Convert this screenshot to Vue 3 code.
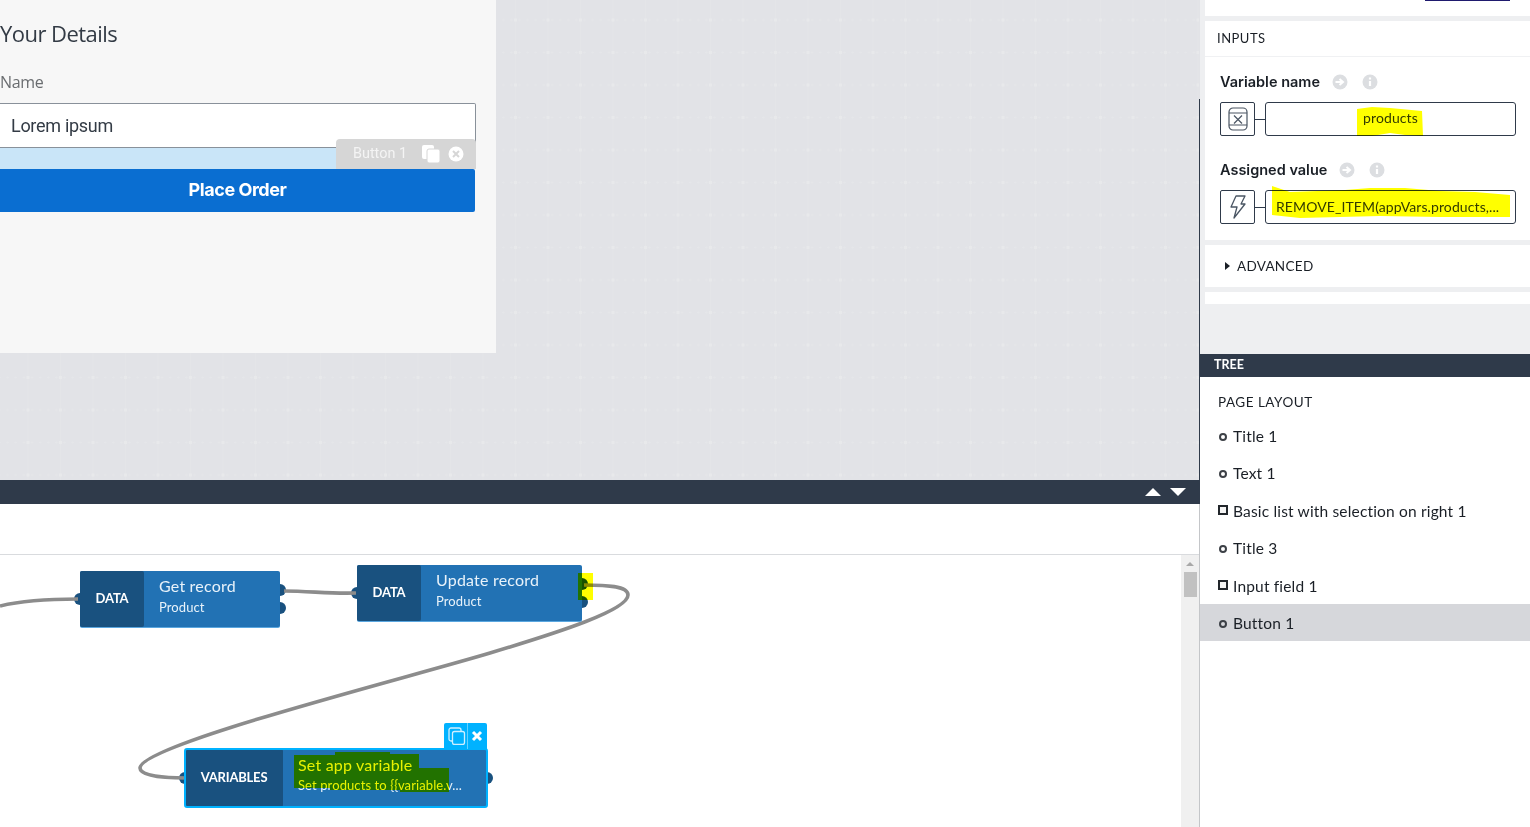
<template>
  <div class="app">
    <div class="main">
      <div class="view">
        <div class="page-card">
          <h1 class="title">Your Details</h1>
          <div class="label">Name</div>
          <div class="input">Lorem ipsum</div>
          <div class="drop-zone">
            <div class="selected-tag">
              <span>Button 1</span>
              <svg width="20" height="20" viewBox="0 0 20 20">
                <rect x="1" y="1" width="12" height="14" rx="2" fill="#fff" />
                <rect x="6" y="5" width="13" height="14" rx="2" fill="#fff" stroke="#d6d6d6" />
              </svg>
              <svg width="16" height="16" viewBox="0 0 16 16">
                <circle cx="8" cy="8" r="7.5" fill="#fff" />
                <path d="M5 5l6 6M11 5l-6 6" stroke="#d6d6d6" stroke-width="2" />
              </svg>
            </div>
          </div>
          <button class="order-btn">Place Order</button>
        </div>
      </div>

      <div class="dock-bar">
        <span class="arrow up"></span>
        <span class="arrow down"></span>
      </div>
      <div class="toolbar"></div>

      <div class="logic">
        <svg class="wires" width="1181" height="272" viewBox="0 555 1181 272">
          <path d="M0 606 C20 601 50 599 78 599" />
          <path d="M284 591 C310 591 330 594 356 593" />
          <path d="M584 585 C606 585 628 586 628 595 C628 610 560 632 490 653 C400 680 140 745 140 768 C140 776 165 778 186 778" />
        </svg>

        <div v-for="node in nodes" :key="node.title" class="node" :class="{ active: node.active }" :style="nodeStyle(node)">
          <div class="node-type">{{ node.type }}</div>
          <div class="node-body">
            <div class="node-title">{{ node.title }}</div>
            <div class="node-sub">{{ node.sub }}</div>
          </div>
          <span class="port in"></span>
          <template v-if="node.active">
            <span class="port out single"></span>
            <div class="node-tools">
              <svg width="18" height="18" viewBox="0 0 18 18" fill="none" stroke="#cfefff" stroke-width="1.3">
                <rect x="1" y="1" width="12" height="13" rx="2" />
                <rect x="4.5" y="4.5" width="12" height="13" rx="2" fill="#00b2ff" />
              </svg>
              <span class="tools-sep"></span>
              <svg width="12" height="12" viewBox="0 0 12 12">
                <path d="M2 2l8 8M10 2l-8 8" stroke="#fff" stroke-width="3" />
              </svg>
            </div>
          </template>
          <template v-else>
            <span class="port out first"></span>
            <span class="port out second"></span>
          </template>
        </div>

        <div class="scrollbar">
          <span class="scroll-up"></span>
          <span class="scroll-thumb"></span>
        </div>
      </div>
    </div>

    <aside class="side">
      <section class="panel top-strip"><span class="top-btn"></span></section>

      <section class="panel inputs">
        <div class="panel-head">INPUTS</div>
        <div class="field">
          <div class="field-label">
            Variable name
            <svg class="hint" width="16" height="16" viewBox="0 0 16 16">
              <circle cx="8" cy="8" r="7.5" fill="#dcdee1" />
              <path d="M3.5 8h6M7.5 5l3.5 3-3.5 3" fill="none" stroke="#fff" stroke-width="2" />
            </svg>
            <svg class="hint" width="16" height="16" viewBox="0 0 16 16">
              <circle cx="8" cy="8" r="7.5" fill="#dcdee1" />
              <path d="M8 7v5M8 3.5v2" stroke="#fff" stroke-width="2.2" />
            </svg>
          </div>
          <div class="field-row">
            <div class="bind-icon">
              <svg width="22" height="24" viewBox="0 0 22 24" fill="none" stroke="#4a5563" stroke-width="1.2">
                <rect x="2" y="1" width="18" height="22" rx="4" />
                <path d="M2 6h18M2 18h18M7 8.5l8 8M15 8.5l-8 8" />
              </svg>
            </div>
            <span class="bind-link"></span>
            <div class="bind-value centered">products</div>
          </div>
        </div>
        <div class="field">
          <div class="field-label">
            Assigned value
            <svg class="hint" width="16" height="16" viewBox="0 0 16 16">
              <circle cx="8" cy="8" r="7.5" fill="#dcdee1" />
              <path d="M3.5 8h6M7.5 5l3.5 3-3.5 3" fill="none" stroke="#fff" stroke-width="2" />
            </svg>
            <svg class="hint" width="16" height="16" viewBox="0 0 16 16">
              <circle cx="8" cy="8" r="7.5" fill="#dcdee1" />
              <path d="M8 7v5M8 3.5v2" stroke="#fff" stroke-width="2.2" />
            </svg>
          </div>
          <div class="field-row">
            <div class="bind-icon">
              <svg width="16" height="24" viewBox="0 0 16 24" fill="none" stroke="#4a5563" stroke-width="1.3" stroke-linejoin="round">
                <path d="M6 1h9l-4 8h4L4 23l3-11H1z" />
              </svg>
            </div>
            <span class="bind-link"></span>
            <div class="bind-value">REMOVE_ITEM(appVars.products,...</div>
          </div>
        </div>
      </section>

      <section class="panel advanced"><span class="caret"></span>ADVANCED</section>
      <section class="panel blank"></section>
      <div class="side-gap"></div>

      <div class="tree-head">TREE</div>
      <section class="tree">
        <div class="tree-title">PAGE LAYOUT</div>
        <div v-for="item in tree" :key="item.name" class="tree-row" :class="{ selected: item.selected }">
          <span :class="item.box ? 'box' : 'dot'"></span>{{ item.name }}
        </div>
      </section>
    </aside>

    <!-- yellow marker strokes drawn on top of the screenshot -->
    <svg class="marker" width="1530" height="827" viewBox="0 0 1530 827">
      <path d="M1357 109 L1372 107 L1390 108 L1422 111 L1423 136 L1405 135 L1390 133 L1372 136 L1357 136 Z" />
      <path d="M1272 186 L1290 192 L1345 190 L1370 188 L1405 188 L1440 191 L1475 192 L1510 195 L1510 217 L1440 217 L1380 216 L1300 218 L1272 215 Z" />
      <path d="M578 573 H593 V600 H578 Z" />
      <path d="M294 755 H335 V752 H390 V754 H419 V768 H449 V792 H400 V790 H330 V788 H294 Z" />
    </svg>
  </div>
</template>

<script setup>
const nodes = [
  { type: 'DATA', title: 'Get record', sub: 'Product', x: 80, y: 16, w: 200 },
  { type: 'DATA', title: 'Update record', sub: 'Product', x: 357, y: 10, w: 225 },
  { type: 'VARIABLES', title: 'Set app variable', sub: 'Set products to {{variable.v...', x: 185, y: 194, w: 302, active: true }
]

const tree = [
  { name: 'Title 1' },
  { name: 'Text 1' },
  { name: 'Basic list with selection on right 1', box: true },
  { name: 'Title 3' },
  { name: 'Input field 1', box: true },
  { name: 'Button 1', selected: true }
]

function nodeStyle(node) {
  return { left: node.x + 'px', top: node.y + 'px', width: node.w + 'px' }
}
</script>

<style>
html, body { margin: 0; overflow: hidden; background: #fff; }
</style>

<style scoped>
.app { position: relative; display: flex; width: 1530px; height: 827px; overflow: hidden; font-family: Lato, "Open Sans", sans-serif; color: #1a1f26; }
.main { width: 1199px; flex-shrink: 0; display: flex; flex-direction: column; }
.marker { position: absolute; left: 0; top: 0; pointer-events: none; mix-blend-mode: multiply; }
.marker path { fill: #ffff00; }

.view {
  height: 480px;
  background-color: #e2e3e7;
  background-image:
    radial-gradient(circle, #e8e9eb 1.5px, transparent 2px),
    radial-gradient(circle, #e5e6e9 0.8px, transparent 1.2px),
    linear-gradient(90deg, #e4e5e8 1px, transparent 1px);
  background-size: 32.5px 32.5px, 8.125px 32.5px, 32.5px 32.5px;
  background-position: 11.75px 3.75px, 11.75px 3.75px, 27.5px 0;
}
.page-card { width: 496px; height: 353px; background: #f7f7f7; box-sizing: border-box; padding-top: 19px; }
.title { margin: 0; font: 400 22px/28px "Open Sans", sans-serif; letter-spacing: -0.55px; color: #333b45; }
.label { margin-top: 24px; font: 400 16px/22px "Open Sans", sans-serif; letter-spacing: -0.3px; color: #6a6d70; }
.input {
  margin-top: 10px;
  width: 476px;
  height: 45px;
  box-sizing: border-box;
  padding-left: 11px;
  background: #fff;
  border: 1px solid #89919a;
  border-left: 0;
  border-radius: 0 2px 0 0;
  font: 400 18px/43px Roboto, sans-serif;
  letter-spacing: -0.3px;
  color: #333b45;
}
.drop-zone { width: 476px; height: 21px; background: #c9e5f8; display: flex; justify-content: flex-end; }
.selected-tag {
  margin-top: -9px;
  width: 140px;
  height: 30px;
  box-sizing: border-box;
  padding: 0 12px 0 17px;
  display: flex;
  align-items: center;
  background: #d6d6d6;
  border-radius: 4px 4px 0 0;
  font: 400 14.4px/1 Roboto, sans-serif;
  color: #f4f4f4;
}
.selected-tag span { flex: 1; }
.selected-tag svg + svg { margin-left: 7px; }
.order-btn {
  display: block;
  width: 475px;
  height: 43px;
  padding: 0 0 2px;
  border: 0;
  border-radius: 0 2px 2px 0;
  background: #0a6ed1;
  color: #fff;
  font: 700 18px/41px Inter, sans-serif;
  letter-spacing: -0.45px;
}

.dock-bar { height: 24px; background: #2f3a4a; display: flex; justify-content: flex-end; align-items: center; gap: 9px; padding-right: 13px; }
.arrow { width: 0; height: 0; border-left: 8px solid transparent; border-right: 8px solid transparent; }
.arrow.up { border-bottom: 8px solid #fff; }
.arrow.down { border-top: 8px solid #fff; }
.toolbar { height: 50px; background: #fff; border-bottom: 1px solid #d9dbde; }

.logic { position: relative; isolation: isolate; flex: 1; background: #fff; overflow: hidden; }
.wires { position: absolute; left: 0; top: 0; }
.wires path { fill: none; stroke: #8c8c8c; stroke-width: 3.6; }

.node {
  position: absolute;
  height: 56px;
  display: flex;
  background: #2272b4;
  border-radius: 2px;
  box-shadow: 0 1px 0 #5aa7e0;
  color: #fff;
}
.node.active { height: 58px; box-shadow: none; outline: 2px solid #00b2ff; outline-offset: -1px; }
.node-type {
  width: 64px;
  flex-shrink: 0;
  box-sizing: border-box;
  padding-bottom: 2px;
  display: flex;
  align-items: center;
  justify-content: center;
  background: #19517f;
  border-radius: 2px;
  font: 700 13px/1 Lato, sans-serif;
  letter-spacing: -0.2px;
}
.node.active .node-type { width: 98px; }
.node-body { padding: 5px 0 0 15px; min-width: 0; }
.node.active .node-body { padding: 6px 0 0 15px; }
.node-title { font: 400 16px/19px Lato, sans-serif; letter-spacing: 0.2px; white-space: nowrap; color: #e8f2fa; }
.node-sub { margin-top: 3px; font: 400 13px/19px Lato, sans-serif; letter-spacing: 0.1px; white-space: nowrap; color: #e8f2fa; }
.node.active .node-sub { margin-top: 2px; }
.port { position: absolute; width: 12px; height: 12px; border-radius: 50%; background: #19517f; z-index: -1; }
.port.in { left: -6px; top: 22px; }
.node.active .port.in { top: 23px; }
.port.out { right: -6px; }
.port.first { top: 13px; }
.port.second { top: 31px; }
.port.single { top: 23px; }
.node-tools {
  position: absolute;
  right: 0;
  top: -26px;
  width: 43px;
  height: 26px;
  box-sizing: border-box;
  padding-left: 4px;
  display: flex;
  align-items: center;
  background: #00b2ff;
  border-radius: 2px 2px 0 0;
}
.tools-sep { width: 1px; height: 26px; margin: 0 3px 0 1px; background: #66d1ff; }
.scrollbar { position: absolute; right: 0; top: 0; bottom: 0; width: 18px; background: #f0f0f0; display: flex; flex-direction: column; align-items: center; }
.scroll-up { margin-top: 7px; width: 0; height: 0; border-left: 4px solid transparent; border-right: 4px solid transparent; border-bottom: 4px solid #a8a8a8; }
.scroll-thumb { margin-top: 6px; width: 13px; height: 25px; background: #c1c1c1; }

.side {
  width: 331px;
  flex-shrink: 0;
  box-sizing: border-box;
  border-left: 1px solid;
  border-image: linear-gradient(to bottom, #e2e3e7 100px, #2f3a4a 100px, #2f3a4a 504px, #c4c6c9 504px) 1;
  background: #eeeff1;
  display: flex;
  flex-direction: column;
}
.panel { margin-left: 5px; background: #fff; }
.top-strip { height: 16px; margin-bottom: 5px; position: relative; }
.top-btn { position: absolute; left: 220px; top: 0; width: 85px; height: 1px; background: #1f1a6e; }
.inputs { height: 219px; margin-bottom: 5px; }
.panel-head { height: 36px; box-sizing: border-box; padding-left: 12px; border-bottom: 1px solid #f0f1f3; font: 400 13px/35px Lato, sans-serif; letter-spacing: 0.5px; color: #1a1f26; }
.field { padding: 15px 14px 0 15px; }
.field + .field { padding-top: 24px; }
.field-label { display: flex; align-items: center; height: 20px; font: 600 14.5px/20px Inter, sans-serif; letter-spacing: 0; }
.hint { margin-left: 12px; }
.hint + .hint { margin-left: 14px; }
.field-row { margin-top: 10px; display: flex; align-items: center; }
.bind-icon { width: 33px; height: 32px; border: 1px solid #2f3a4a; border-radius: 2px; display: flex; align-items: center; justify-content: center; flex-shrink: 0; }
.bind-link { width: 10px; height: 1px; background: #2f3a4a; }
.bind-value { flex: 1; height: 32px; border: 1px solid #2f3a4a; border-radius: 3px; padding-left: 10px; font: 400 14px/31px Lato, sans-serif; letter-spacing: 0.1px; color: #333b45; white-space: nowrap; }
.bind-value.centered { text-align: center; padding-left: 0; line-height: 30px; }
.advanced { height: 42px; margin-bottom: 5px; padding-left: 20px; font: 400 13.5px/41px Lato, sans-serif; letter-spacing: 0.3px; display: flex; align-items: center; }
.caret { width: 0; height: 0; margin-right: 7px; border-top: 4px solid transparent; border-bottom: 4px solid transparent; border-left: 5px solid #1a1f26; }
.blank { height: 12px; }
.side-gap { height: 50px; }
.tree-head { height: 23px; padding-left: 14px; background: #2f3a4a; color: #fff; font: 700 12.5px/21px Lato, sans-serif; }
.tree { flex: 1; background: #fff; padding-top: 9px; }
.tree-title { height: 31px; padding-left: 18px; font: 400 13.5px/33px Lato, sans-serif; letter-spacing: 0.5px; }
.tree-row { height: 37.4px; box-sizing: border-box; padding: 2px 0 0 18px; display: flex; align-items: center; font: 400 15.5px/1 Lato, sans-serif; letter-spacing: 0.17px; }
.tree-row.selected { background: #d6d7db; }
.dot { width: 4px; height: 4px; margin: 0 6px 0 1px; border: 2px solid #3c4046; border-radius: 50%; flex-shrink: 0; }
.box { width: 6px; height: 6px; margin: -2px 5px 0 0; border: 2px solid #22262b; background: #f4f4f4; flex-shrink: 0; }
</style>
